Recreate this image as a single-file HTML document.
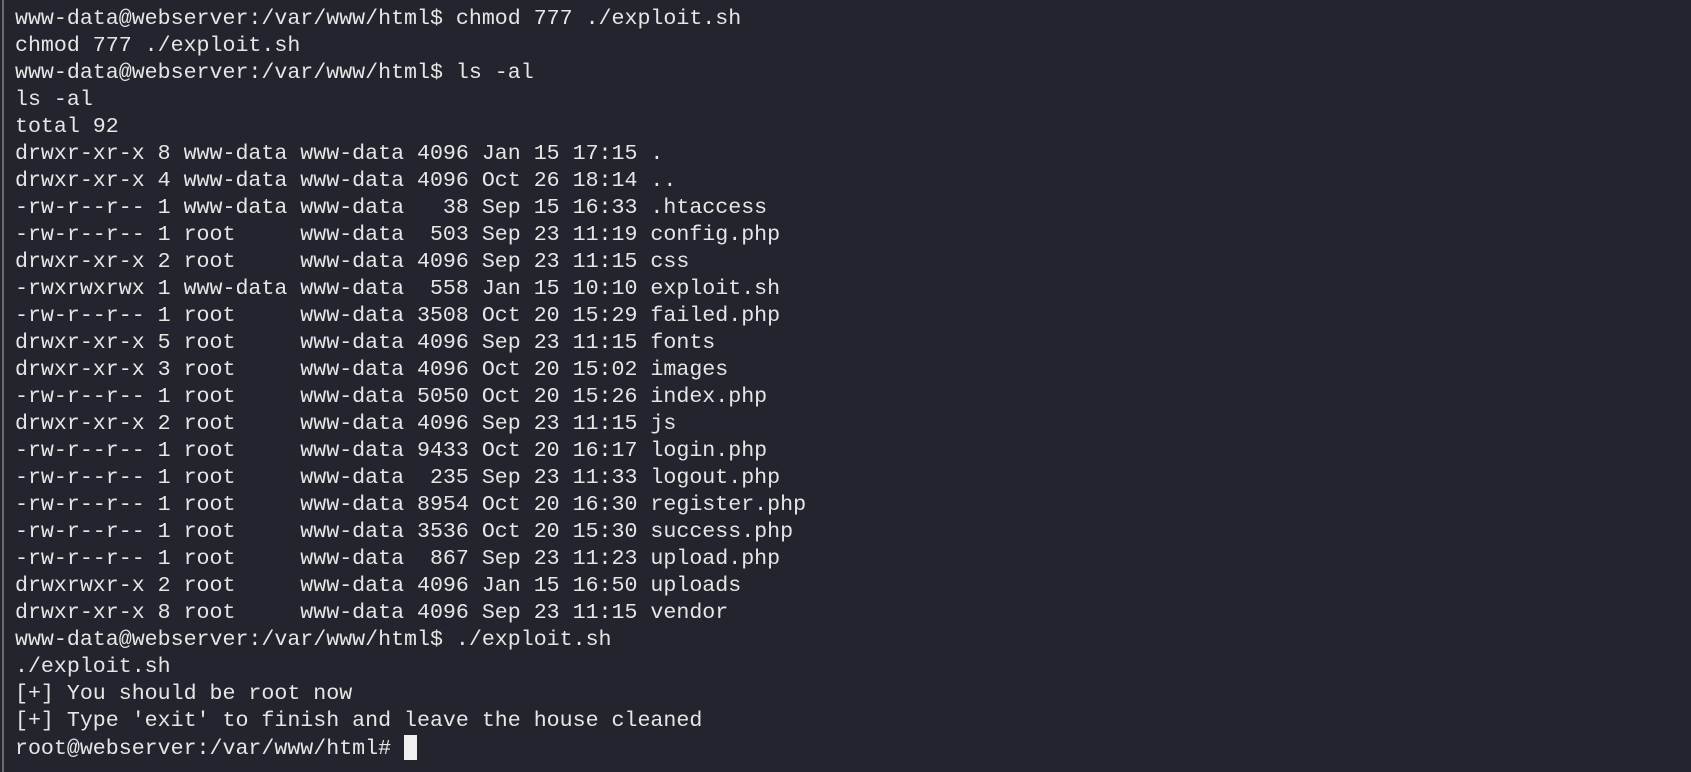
<!DOCTYPE html>
<html><head><meta charset="utf-8"><style>
html,body{margin:0;padding:0;}
body{width:1691px;height:772px;background:#23252e;overflow:hidden;position:relative;}
.bar{position:absolute;left:2px;top:0;width:2px;height:772px;background:#6a6c72;}
.t{position:absolute;left:15px;top:6px;font-family:"Liberation Mono","DejaVu Sans Mono",monospace;font-size:21.62px;color:#e6e6e6;}
.t div{height:27px;line-height:27px;white-space:pre;}
.cur{display:inline-block;width:13px;height:25px;background:#f0f0f0;vertical-align:-6px;}
</style></head><body><div class="bar"></div><div class="t">
<div>www-data@webserver:/var/www/html$ chmod 777 ./exploit.sh</div>
<div>chmod 777 ./exploit.sh</div>
<div>www-data@webserver:/var/www/html$ ls -al</div>
<div>ls -al</div>
<div>total 92</div>
<div>drwxr-xr-x 8 www-data www-data 4096 Jan 15 17:15 .</div>
<div>drwxr-xr-x 4 www-data www-data 4096 Oct 26 18:14 ..</div>
<div>-rw-r--r-- 1 www-data www-data   38 Sep 15 16:33 .htaccess</div>
<div>-rw-r--r-- 1 root     www-data  503 Sep 23 11:19 config.php</div>
<div>drwxr-xr-x 2 root     www-data 4096 Sep 23 11:15 css</div>
<div>-rwxrwxrwx 1 www-data www-data  558 Jan 15 10:10 exploit.sh</div>
<div>-rw-r--r-- 1 root     www-data 3508 Oct 20 15:29 failed.php</div>
<div>drwxr-xr-x 5 root     www-data 4096 Sep 23 11:15 fonts</div>
<div>drwxr-xr-x 3 root     www-data 4096 Oct 20 15:02 images</div>
<div>-rw-r--r-- 1 root     www-data 5050 Oct 20 15:26 index.php</div>
<div>drwxr-xr-x 2 root     www-data 4096 Sep 23 11:15 js</div>
<div>-rw-r--r-- 1 root     www-data 9433 Oct 20 16:17 login.php</div>
<div>-rw-r--r-- 1 root     www-data  235 Sep 23 11:33 logout.php</div>
<div>-rw-r--r-- 1 root     www-data 8954 Oct 20 16:30 register.php</div>
<div>-rw-r--r-- 1 root     www-data 3536 Oct 20 15:30 success.php</div>
<div>-rw-r--r-- 1 root     www-data  867 Sep 23 11:23 upload.php</div>
<div>drwxrwxr-x 2 root     www-data 4096 Jan 15 16:50 uploads</div>
<div>drwxr-xr-x 8 root     www-data 4096 Sep 23 11:15 vendor</div>
<div>www-data@webserver:/var/www/html$ ./exploit.sh</div>
<div>./exploit.sh</div>
<div>[+] You should be root now</div>
<div>[+] Type 'exit' to finish and leave the house cleaned</div>
<div>root@webserver:/var/www/html# <span class="cur"></span></div>
</div></body></html>
